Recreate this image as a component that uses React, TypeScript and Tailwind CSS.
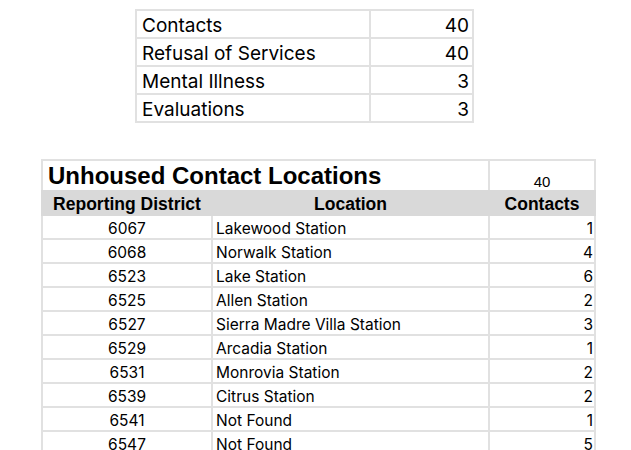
import React from "react";

const summary: [string, string][] = [
  ["Contacts", "40"],
  ["Refusal of Services", "40"],
  ["Mental Illness", "3"],
  ["Evaluations", "3"],
];

const rows: [string, string, string][] = [
  ["6067", "Lakewood Station", "1"],
  ["6068", "Norwalk Station", "4"],
  ["6523", "Lake Station", "6"],
  ["6525", "Allen Station", "2"],
  ["6527", "Sierra Madre Villa Station", "3"],
  ["6529", "Arcadia Station", "1"],
  ["6531", "Monrovia Station", "2"],
  ["6539", "Citrus Station", "2"],
  ["6541", "Not Found", "1"],
  ["6547", "Not Found", "5"],
];

const aptos = { fontFamily: 'Inter, "Liberation Sans", Arial, sans-serif' };

export default function App() {
  return (
    <div
      className="w-[631px] h-[450px] overflow-hidden bg-white text-black flex flex-col"
      style={{ fontFamily: '"Liberation Sans", Arial, sans-serif' }}
    >
      {/* Summary table */}
      <div
        className="ml-[135px] mt-[9px] w-[339px] bg-[#e1e1e1] p-[2px] flex flex-col gap-[2px]"
        style={aptos}
      >
        {summary.map(([label, value]) => (
          <div key={label} className="grid grid-cols-[232px_101px] gap-x-[2px] h-[26px]">
            <div className="bg-white flex items-center pl-[5px] pt-[3px] text-[19px] leading-none">{label}</div>
            <div className="bg-white flex items-center justify-end pr-[3px] pt-[3px] text-[19px] leading-none">{value}</div>
          </div>
        ))}
      </div>

      {/* Locations table */}
      <div className="ml-[41px] mt-[36px] w-[555px] bg-[#e1e1e1] px-[2px] pt-[2px] flex flex-col">
        <div className="grid grid-cols-[168px_275px_104px] gap-x-[2px] h-[29px]">
          <div className="col-span-2 bg-white flex items-center pl-[5px] text-[24px] font-bold leading-none">
            Unhoused Contact Locations
          </div>
          <div className="bg-white flex items-end justify-center pb-[1px] text-[15px] leading-none">40</div>
        </div>
        <div className="-mx-[2px] px-[2px] bg-[#d9d9d9] grid grid-cols-[168px_275px_104px] gap-x-[2px] h-[26px] text-[17.5px] font-bold leading-none">
          <div className="flex items-end justify-center pb-[3px]">Reporting District</div>
          <div className="flex items-end justify-center pb-[3px]">Location</div>
          <div className="flex items-end justify-center pb-[3px]">Contacts</div>
        </div>
        <div className="flex flex-col gap-[2px]" style={aptos}>
          {rows.map(([d, loc, c], i) => (
            <div key={i} className="grid grid-cols-[168px_275px_104px] gap-x-[2px] h-[22px] text-[15.5px] leading-none">
              <div className="bg-white flex items-center justify-center pt-[4px]">{d}</div>
              <div className="bg-white flex items-center pl-[3px] pt-[4px]">{loc}</div>
              <div className="bg-white flex items-center justify-end pr-[1px] pt-[4px]">{c}</div>
            </div>
          ))}
        </div>
      </div>
    </div>
  );
}
